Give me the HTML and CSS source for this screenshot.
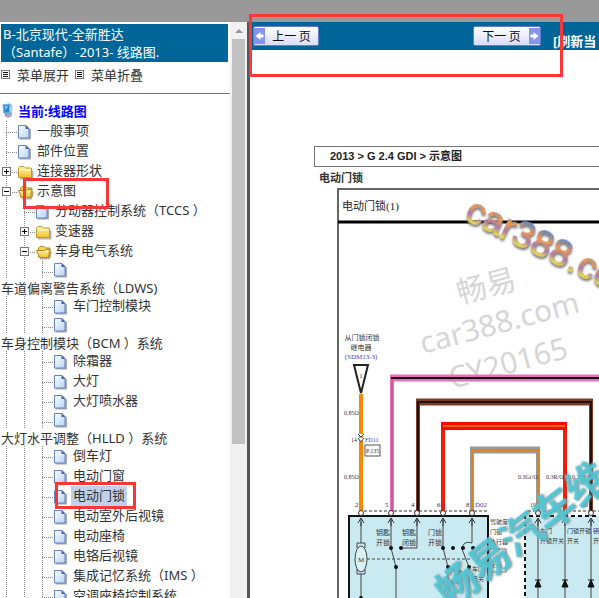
FILE: index.html
```html
<!DOCTYPE html>
<html lang="zh-CN">
<head>
<meta charset="utf-8">
<title>线路图</title>
<link rel="stylesheet" href="styles.css">
</head>
<body>
<svg class="defs" aria-hidden="true">
  <defs>
    <linearGradient id="paper" x1="0" y1="0" x2="1" y2="1"><stop offset="0" stop-color="#fff"/><stop offset="1" stop-color="#b4d2f8"/></linearGradient>
    <linearGradient id="gold" x1="0" y1="0" x2="0" y2="1"><stop offset="0" stop-color="#fff6a8"/><stop offset="1" stop-color="#f0c030"/></linearGradient>
    <symbol id="page" viewBox="0 0 18 18"><path d="M1.500 15.500h10.500V6" fill="none" stroke="#aaa" stroke-width="2"/><path d="M.5 2.500h7.500l3 3v9.500H.5z" fill="url(#paper)" stroke="#6583c0"/><path d="M7.500 2v4h4z" fill="#4467ac"/></symbol>
    <symbol id="folder" viewBox="0 0 18 18"><path d="M2 15.500h12.500v-8" fill="none" stroke="#b5b5b5" stroke-width="2"/><path d="M.5 5l1.500-1.500h4L7.500 5h5.500l.5 1v8.500H.5z" fill="url(#gold)" stroke="#bd982b"/><path d="M1 7h12" stroke="#fffbd0"/></symbol>
    <symbol id="open" viewBox="0 0 18 18"><path d="M4 15.500h9l2-7" fill="none" stroke="#b5b5b5" stroke-width="2"/><path d="M2.500 14V5L4 3.500h4L9.500 5H14v9z" fill="#f7d75b" stroke="#b28c22"/><path d="M.5 7.500h8l1-1h4l-1 8h-9z" fill="url(#gold)" stroke="#b28c22"/></symbol>
    <symbol id="computer" viewBox="0 0 18 18"><path d="M1 2l8-1 2 2v9l-7 1-2-2z" fill="#75b7e6" stroke="#7b9fbd"/><path d="M2 3l6-1v8l-5 1z" fill="#2686d9"/><path d="M3 4l4-1-3 5z" fill="#8bd6ff"/><path d="M9 3l2 1v7l-2-1z" fill="#c6d9e6"/><path d="M3 14l5-2 3 2-4 2z" fill="#bcb7cf" stroke="#8c879d"/></symbol>
  </defs>
</svg>
<div class="topbar"></div>
<div class="frames">
  <aside class="sidebar">
    <div class="menu">
      <h1 class="title">B-北京现代-全新胜达<br>（Santafe）-2013- 线路图.</h1>
      <div class="tools"><a href="#"><i class="list"></i>菜单展开</a><a href="#"><i class="list"></i>菜单折叠</a></div>
      <div class="root"><svg class="icon"><use href="#computer"/></svg>当前:线路图</div>
      <ul class="tree">
        <li><i class="tee"></i><svg class="icon"><use href="#page"/></svg><a href="#">一般事项</a></li>
        <li><i class="tee"></i><svg class="icon"><use href="#page"/></svg><a href="#">部件位置</a></li>
        <li><i class="tee"><button class="toggle plus" aria-label="展开"></button></i><svg class="icon"><use href="#folder"/></svg><a href="#">连接器形状</a></li>
        <li><i class="tee"><button class="toggle" aria-label="折叠"></button></i><svg class="icon"><use href="#open"/></svg><a href="#">示意图</a></li>
        <li><i class="bar"></i><i class="tee"></i><svg class="icon"><use href="#page"/></svg><a href="#">分动器控制系统（TCCS ）</a></li>
        <li><i class="bar"></i><i class="tee"><button class="toggle plus" aria-label="展开"></button></i><svg class="icon"><use href="#folder"/></svg><a href="#">变速器</a></li>
        <li><i class="bar"></i><i class="tee"><button class="toggle" aria-label="折叠"></button></i><svg class="icon"><use href="#open"/></svg><a href="#">车身电气系统</a></li>
        <li class="wrapped"><i class="bar"></i><i class="bar"></i><i class="tee"></i><svg class="icon"><use href="#page"/></svg><a href="#">车道偏离警告系统（LDWS)</a></li>
        <li><i class="bar"></i><i class="bar"></i><i class="tee"></i><svg class="icon"><use href="#page"/></svg><a href="#">车门控制模块</a></li>
        <li class="wrapped"><i class="bar"></i><i class="bar"></i><i class="tee"></i><svg class="icon"><use href="#page"/></svg><a href="#">车身控制模块（BCM ）系统</a></li>
        <li><i class="bar"></i><i class="bar"></i><i class="tee"></i><svg class="icon"><use href="#page"/></svg><a href="#">除霜器</a></li>
        <li><i class="bar"></i><i class="bar"></i><i class="tee"></i><svg class="icon"><use href="#page"/></svg><a href="#">大灯</a></li>
        <li><i class="bar"></i><i class="bar"></i><i class="tee"></i><svg class="icon"><use href="#page"/></svg><a href="#">大灯喷水器</a></li>
        <li class="wrapped"><i class="bar"></i><i class="bar"></i><i class="tee"></i><svg class="icon"><use href="#page"/></svg><a href="#">大灯水平调整（HLLD ）系统</a></li>
        <li><i class="bar"></i><i class="bar"></i><i class="tee"></i><svg class="icon"><use href="#page"/></svg><a href="#">倒车灯</a></li>
        <li><i class="bar"></i><i class="bar"></i><i class="tee"></i><svg class="icon"><use href="#page"/></svg><a href="#">电动门窗</a></li>
        <li><i class="bar"></i><i class="bar"></i><i class="tee"></i><svg class="icon"><use href="#page"/></svg><a href="#" class="selected">电动门锁</a></li>
        <li><i class="bar"></i><i class="bar"></i><i class="tee"></i><svg class="icon"><use href="#page"/></svg><a href="#">电动室外后视镜</a></li>
        <li><i class="bar"></i><i class="bar"></i><i class="tee"></i><svg class="icon"><use href="#page"/></svg><a href="#">电动座椅</a></li>
        <li><i class="bar"></i><i class="bar"></i><i class="tee"></i><svg class="icon"><use href="#page"/></svg><a href="#">电铬后视镜</a></li>
        <li><i class="bar"></i><i class="bar"></i><i class="tee"></i><svg class="icon"><use href="#page"/></svg><a href="#">集成记忆系统（IMS ）</a></li>
        <li><i class="bar"></i><i class="bar"></i><i class="tee"></i><svg class="icon"><use href="#page"/></svg><a href="#">空调座椅控制系统</a></li>
      </ul>
    </div>
    <div class="scrollbar"><i class="up"></i><i class="thumb"></i></div>
  </aside>
  <main class="content">
    <nav class="pager">
      <button class="nav prev"><svg class="arrow" viewBox="0 0 10 16"><path d="M1 8l5-4v2.500h3v3H6V12z" fill="#fff"/></svg><span>上一 页</span></button>
      <button class="nav next"><span>下一 页</span><svg class="arrow" viewBox="0 0 10 16"><path d="M9 8L4 4v2.500H1v3h3V12z" fill="#fff"/></svg></button>
      <a href="#" class="refresh">[刷新当</a>
    </nav>
    <article class="sheet">
      <div class="crumb">2013 &gt; G 2.4 GDI &gt; 示意图</div>
      <h2>电动门锁</h2>
      <svg class="diagram" width="400" height="420" viewBox="310 187 400 420" role="img" aria-label="电动门锁线路图">
        <defs>
          <linearGradient id="rainbow" x1="0" y1="0" x2="0" y2="1"><stop offset=".2" stop-color="#7088b8"/><stop offset=".42" stop-color="#ef9850"/><stop offset=".62" stop-color="#a77bae"/><stop offset=".8" stop-color="#f0df48"/></linearGradient>
          <g id="pin"><path d="M-3 523l3-5 3 5M0 518v8" fill="none" stroke="#333"/><circle cy="513" r="2.500" fill="#fff" stroke="#333"/></g>
          <path id="diode" d="M-3 580h6M0 580l-3 7h6z" fill="#111" stroke="#111"/>
        </defs>
        <path d="M338 620V189H720" fill="none" stroke="#666" stroke-width="2"/>
        <path d="M338 222H720" stroke="#000" stroke-width="3"/>
        <text class="heading" x="342" y="210">电动门锁<tspan class="roman">(1)</tspan></text>
        <g class="stamp" transform="translate(460 304) rotate(-15)"><text>畅易</text></g>
        <g class="stamp" transform="translate(423 354) rotate(-15)"><text>car388.com</text></g>
        <g class="stamp" transform="translate(452 389) rotate(-15)"><text>CY20165</text></g>

        <rect x="349" y="516" width="139" height="100" fill="#c9eaf1" stroke="#111" stroke-width="2"/>
        <rect x="525" y="516" width="160" height="100" fill="#c9eaf1"/>
        <path d="M525 610V516H700" fill="none" stroke="#111" stroke-width="2" stroke-dasharray="4 3"/>
        <path d="M364 511H489M528 511H700" stroke="#333" stroke-dasharray="3 2"/>
        <g fill="none">
          <path d="M392 512V378H700" stroke="#ed6fb3" stroke-width="4"/><path d="M390 378H700" stroke="#ed6fb3" stroke-width="7"/><path d="M392 512V378" stroke="#a9468a"/><path d="M391 378H700" stroke="#111" stroke-width="2"/>
          <path d="M418 512V402H591V512" stroke="#7a3b28" stroke-width="4"/><path d="M416 402H593" stroke="#7a3b28" stroke-width="7"/><path d="M418 512V402H591V512" stroke="#24110e" stroke-width="2"/>
          <path d="M443 512V426H565V512" stroke="#f51b0a" stroke-width="4"/><path d="M441 426H567" stroke="#f60b00" stroke-width="8"/><path d="M443 426H565" stroke="#ff6a00" stroke-width="2"/>
          <path d="M472 512V450H538V512" stroke="#999" stroke-width="4"/><path d="M470 450H540" stroke="#999" stroke-width="7"/><path d="M472 512V450H538V512" stroke="#df8224" stroke-width="2"/>
          <path d="M361 394V512" stroke="#f98700" stroke-width="4"/>
          <path d="M354 365H368L361 393Z" stroke="#222" stroke-width="2" fill="#fff"/>
        </g>
        <path d="M358 434l3 3 3-3M358 438l3 4 3-4" fill="#fff" stroke="#444"/>
        <g class="tiny" text-anchor="middle"><text x="362" y="340">从门锁闭锁</text><text x="361" y="350">继电器</text><text class="blue" x="361" y="359">(SDM13-3)</text><text x="361" y="378">1</text></g>
        <g class="tiny small"><text x="344" y="415">0.85O</text><text x="351" y="442">14</text><text class="blue" x="365" y="442">FD11</text><text x="366" y="453">P.135</text><text x="344" y="479">0.85O</text><text x="518" y="479">0.3Gr/O</text><text x="546" y="479">0.3R/O</text><text x="572" y="479">0.3Br/B</text><text x="530" y="507">19</text><text x="557" y="507">22</text><text x="582" y="507">20</text></g>
        <g class="tiny"><text x="355" y="507">2</text><text x="385" y="507">5</text><text x="411" y="507">4</text><text x="437" y="507">6</text><text x="466" y="507">8</text><text class="blue" x="475" y="507">D02</text></g>
        <rect x="365" y="445" width="15" height="11" fill="none" stroke="#555"/>
        <g stroke="#444" fill="none">
          <path d="M361 522V543M357 548V543H365V548M357 569V574H365V569M361 574V610M391 520V548L396 567V610M401 548H417V520M443 520V548L448 567V610M472 520V543Q463 540 462 549L469 567V610M538 520V610M565 520V610M591 520V610"/>
          <path d="M367 559H470" stroke-dasharray="3 2"/>
          <ellipse cx="361" cy="559" rx="6" ry="13" fill="#d7f2f7"/>
        </g>
        <g fill="#111"><circle cx="391" cy="548" r="2"/><circle cx="401" cy="548" r="2"/><circle cx="396" cy="567" r="2"/><circle cx="443" cy="548" r="2"/><circle cx="453" cy="548" r="2"/><circle cx="448" cy="567" r="2"/><circle cx="463" cy="548" r="2"/><circle cx="473" cy="548" r="2"/><circle cx="469" cy="567" r="2"/><circle cx="361" cy="598" r="2"/></g>
        <use href="#pin" x="361"/><use href="#pin" x="391"/><use href="#pin" x="417"/><use href="#pin" x="443"/><use href="#pin" x="472"/><use href="#pin" x="538"/><use href="#pin" x="565"/><use href="#pin" x="591"/>
        <use href="#diode" x="538"/><use href="#diode" x="565"/><use href="#diode" x="591"/>
        <g class="tiny"><text x="358" y="562">M</text><text x="376" y="535">钥匙</text><text x="376" y="545">开锁</text><text x="402" y="535">钥匙</text><text x="402" y="545">闭锁</text><text x="428" y="535">门锁</text><text x="428" y="545">开锁</text></g>
        <g class="tiny small"><text x="450" y="575">门锁</text><text x="450" y="585">开关</text><text x="472" y="571">车门</text><text x="472" y="581">开关</text>
        <text x="490" y="524">驾驶席</text><text x="490" y="534">门锁</text><text x="490" y="544">执行器</text><text x="492" y="568">E30</text><text x="540" y="533">车门</text><text x="540" y="543">开锁开关</text><text x="567" y="533">门锁开锁</text><text x="567" y="543">开关</text><text x="593" y="533">钥</text><text x="593" y="543">开</text></g>
        <rect x="490" y="549" width="16" height="23" fill="none" stroke="#777"/>
        <g class="teal" transform="translate(450 609) rotate(-38)"><text>畅易汽车维</text></g>
        <g class="rainbow" transform="translate(463 219) rotate(26)"><text>car388.com</text></g>
      </svg>
    </article>
  </main>
</div>
<div class="mark mark-pager"></div><div class="mark mark-folder"></div><div class="mark mark-item"></div>
</body>
</html>
```
FILE: styles.css
```css
* { box-sizing: border-box; }
body { margin: 0; height: 100vh; display: flex; flex-direction: column; overflow: hidden; background: #fff; color: #333; font: 13px/20px "Noto Sans", "Noto Sans CJK SC", sans-serif; }
a { color: inherit; text-decoration: none; }
.defs { position: absolute; width: 0; height: 0; }
.topbar { flex: 0 0 22px; background: #999; }
.frames { flex: 1; min-height: 0; display: flex; }
.sidebar { flex: 0 0 250px; display: flex; border-right: 3px solid #555; overflow: hidden; }
.menu { flex: 1; min-width: 0; }
.title { margin: 2px 2px 0 1px; padding: 1px 2px; height: 38px; background: #069; color: #fff; font-size: 13px; line-height: 18px; font-weight: 400; white-space: nowrap; }
.tools { display: flex; gap: 6px; height: 32px; padding: 2px 1px 8px; border-bottom: 1px solid #777; white-space: nowrap; }
.tools a { display: flex; align-items: center; gap: 7px; }
.list { width: 9px; height: 9px; border: 1px solid #777; background: repeating-linear-gradient(#111 0 1px, #fff 1px 2px) 1px 1px / 5px 5px no-repeat, #fff; }
.root { display: flex; align-items: center; height: 20px; margin-top: 7px; color: #00f; font-weight: 700; }
.root .icon { margin-left: 2px; width: 16px; }
.icon { flex: none; width: 20px; height: 18px; overflow: visible; }
.icon use { width: 18px; height: 18px; }
.tree { list-style: none; margin: 0; padding: 0; }
.tree li { display: flex; height: 20px; white-space: nowrap; }
.tree a { line-height: 18px; }
.tree li .icon { margin-left: -1px; margin-top: 2px; }
.bar, .tee { flex: none; width: 18px; height: 100%; background: repeating-linear-gradient(#888 0 1px, transparent 1px 2px) 6px 0 / 1px 100% no-repeat; }
.tee { display: flex; align-items: center; padding: 1px 0 0 2px; background: repeating-linear-gradient(#888 0 1px, transparent 1px 2px) 6px 0 / 1px 100% no-repeat, repeating-linear-gradient(90deg, #888 0 1px, transparent 1px 2px) 6px 11px / 12px 1px no-repeat; }
.toggle { width: 9px; height: 9px; padding: 0; border: 1px solid #777; background: linear-gradient(#000, #000) 1px 3px / 5px 1px no-repeat, #fff; }
.plus { background: linear-gradient(#000, #000) 1px 3px / 5px 1px no-repeat, linear-gradient(#000, #000) 3px 1px / 1px 5px no-repeat, #fff; }
.tree .wrapped { flex-wrap: wrap; height: 35px; align-content: flex-start; }
.wrapped .bar, .wrapped .tee { height: 18px; }
.tree .wrapped .icon { margin-top: 0; height: 18px; }
.wrapped a { flex: 0 0 100%; padding-left: 1px; }
.tree .selected { background: #bed0ea; padding: 0 2px; margin-left: -2px; }
.scrollbar { flex: 0 0 17px; padding: 7px 2px; background: #f1f1f1; }
.scrollbar i { display: block; }
.up { width: 0; margin: 0 auto 6px; border: 4px solid transparent; border-top-width: 0; border-bottom-color: #999; }
.thumb { height: 72%; background: #c1c1c1; }
.content { flex: 1; min-width: 0; overflow: hidden; }
.pager { display: flex; height: 28px; padding: 4px 0 0 3px; background: #069; white-space: nowrap; }
.nav { flex: none; display: flex; align-items: center; width: 66px; height: 20px; padding: 0; border: 1px solid #667bd1; border-radius: 2px; background: linear-gradient(#fff, #d8dcfa); color: #111; font: 12px/16px "Noto Sans CJK SC", sans-serif; }
.nav span { flex: 1; }
.arrow { width: 11px; height: 16px; background: #8494ed; }
.next { margin-left: 154px; width: 68px; }
.refresh { flex: none; margin-left: 12px; color: #fff; font-weight: 700; line-height: 30px; }
.sheet { padding: 96px 0 0 60px; }
.crumb { height: 21px; margin-left: 4px; padding-left: 15px; border: 1px solid #777; border-right: 0; color: #222; font: 700 11px/19px "Liberation Sans", "Noto Sans CJK SC", sans-serif; white-space: nowrap; }
h2 { margin: 0 0 0 9px; height: 20px; font-size: 11px; line-height: 22px; font-weight: 700; }
.diagram { display: block; }
.heading { font: 11px "Noto Sans CJK SC", sans-serif; fill: #222; }
.roman { font-family: "Liberation Serif", serif; }
.tiny { font: 7px "Liberation Serif", "Noto Sans CJK SC", serif; fill: #333; }
.small { font-size: 6px; }
.tiny .blue { fill: #4545b8; }
.stamp { font: 30px "Noto Sans", "Noto Sans CJK SC", sans-serif; fill: #d6d6d6; }
.teal { font: 700 41px "Noto Sans CJK SC", sans-serif; fill: #4dccdd; fill-opacity: .85; filter: drop-shadow(1px 1px 1px #777); }
.rainbow { font: 37px "Liberation Sans", sans-serif; fill: url(#rainbow); stroke: url(#rainbow); stroke-width: 1px; filter: drop-shadow(1px 2px 1px #777); }
.mark { position: absolute; border: 3px solid #f83838; pointer-events: none; }
.mark-pager { left: 249px; top: 14px; width: 314px; height: 63px; }
.mark-folder { left: 23px; top: 178px; width: 86px; height: 31px; }
.mark-item { left: 55px; top: 482px; width: 81px; height: 27px; }
```
